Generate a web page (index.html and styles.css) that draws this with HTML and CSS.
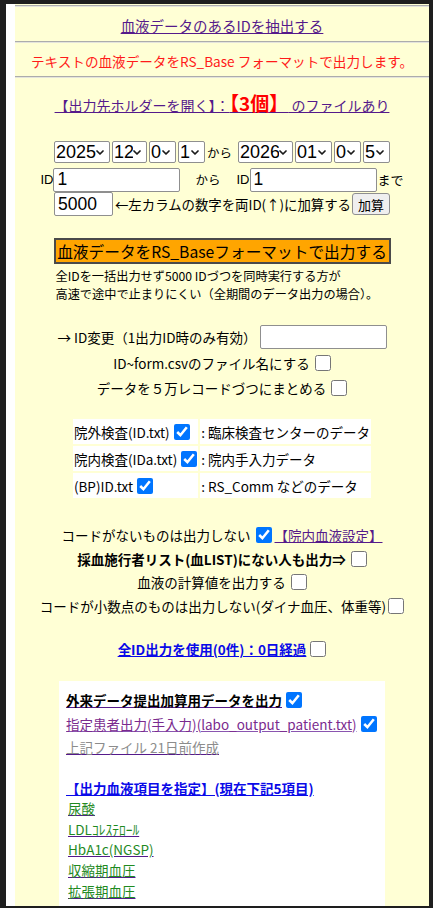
FILE: index.html
```html
<!DOCTYPE html>
<html lang="ja">
<head>
<meta charset="utf-8">
<title>RS_Base 出力</title>
<link rel="stylesheet" href="styles.css">
</head>
<body>
<div class="frame">
  <div class="panel">
    <hr class="rule">
    <div class="head"><a class="lk-v" href="#">血液データのあるIDを抽出する</a></div>
    <hr class="rule">
    <div class="notice">テキストの血液データをRS_Base フォーマットで出力します。</div>
    <hr class="rule">
    <div class="folder"><a class="lk-v" href="#">【出力先ホルダーを開く】：<span class="count">【3個】</span> のファイルあり</a></div>

    <form class="form">
      <div class="row date-row">
        <span class="selw w-y"><select class="sel"><option>2025</option></select><svg class="chev" viewBox="0 0 8 5"><path d="M1 1l3 3 3-3"/></svg></span>
        <span class="selw w-m"><select class="sel"><option>12</option></select><svg class="chev" viewBox="0 0 8 5"><path d="M1 1l3 3 3-3"/></svg></span>
        <span class="selw w-d"><select class="sel"><option>0</option></select><svg class="chev" viewBox="0 0 8 5"><path d="M1 1l3 3 3-3"/></svg></span>
        <span class="selw w-d"><select class="sel"><option>1</option></select><svg class="chev" viewBox="0 0 8 5"><path d="M1 1l3 3 3-3"/></svg></span>
        <span class="kara">から</span>
        <span class="selw w-y2"><select class="sel"><option>2026</option></select><svg class="chev" viewBox="0 0 8 5"><path d="M1 1l3 3 3-3"/></svg></span>
        <span class="selw w-m2"><select class="sel"><option>01</option></select><svg class="chev" viewBox="0 0 8 5"><path d="M1 1l3 3 3-3"/></svg></span>
        <span class="selw w-d"><select class="sel"><option>0</option></select><svg class="chev" viewBox="0 0 8 5"><path d="M1 1l3 3 3-3"/></svg></span>
        <span class="selw w-d"><select class="sel"><option>5</option></select><svg class="chev" viewBox="0 0 8 5"><path d="M1 1l3 3 3-3"/></svg></span>
      </div>
      <div class="row id-row">
        <span class="lbl">ID</span><input class="txt w-id" type="text" value="1">
        <span class="kara2">から</span>
        <span class="lbl">ID</span><input class="txt w-id" type="text" value="1">
        <span class="made">まで</span>
      </div>
      <div class="row calc-row">
        <input class="txt w-add" type="text" value="5000">
        <span class="calc-txt">←左カラムの数字を両ID(↑)に加算する</span>
        <button class="btn-add" type="button">加算</button>
      </div>

      <button class="go" type="button">血液データをRS_Baseフォーマットで出力する</button>
      <div class="note">全IDを一括出力せず5000 IDづつを同時実行する方が<br>高速で途中で止まりにくい（全期間のデータ出力の場合）。</div>

      <div class="opts">
        <div class="opt opt-tall">
          <span>→ ID変更（1出力ID時のみ有効）</span>
          <input class="txt w-chg" type="text">
        </div>
        <div class="opt opt-25">
          <span>ID~form.csvのファイル名にする</span>
          <input class="cb" type="checkbox">
        </div>
        <div class="opt opt-25">
          <span>データを５万レコードづつにまとめる</span>
          <input class="cb" type="checkbox">
        </div>
      </div>

      <table class="src">
        <tr>
          <td>院外検査(ID.txt) <input class="cb cb-in" type="checkbox" checked></td>
          <td>: 臨床検査センターのデータ</td>
        </tr>
        <tr>
          <td>院内検査(IDa.txt) <input class="cb cb-in" type="checkbox" checked></td>
          <td>: 院内手入力データ</td>
        </tr>
        <tr>
          <td>(BP)ID.txt <input class="cb cb-in" type="checkbox" checked></td>
          <td>: RS_Comm などのデータ</td>
        </tr>
      </table>

      <div class="flags">
        <div class="opt opt-f">
          <span>コードがないものは出力しない</span>
          <input class="cb" type="checkbox" checked>
          <a class="lk-v inhouse" href="#">【院内血液設定】</a>
        </div>
        <div class="opt opt-f">
          <b>採血施行者リスト(血LIST)にない人も出力⇒</b>
          <input class="cb" type="checkbox">
        </div>
        <div class="opt opt-f">
          <span>血液の計算値を出力する</span>
          <input class="cb" type="checkbox">
        </div>
        <div class="opt opt-f tight">
          <span>コードが小数点のものは出力しない(ダイナ血圧、体重等)</span>
          <input class="cb" type="checkbox">
        </div>
        <div class="opt opt-f all-id">
          <a class="lk-b" href="#"><b>全ID出力を使用(0件)：0日経過</b></a>
          <input class="cb" type="checkbox">
        </div>
      </div>

      <div class="outbox">
        <div class="ob-row ob-1">
          <a class="lk-v" href="#"><b class="blk">外来データ提出加算用データを出力</b></a>
          <input class="cb" type="checkbox" checked>
        </div>
        <div class="ob-row ob-2">
          <a class="lk-p" href="#">指定患者出力(手入力)(labo_output_patient.txt)</a>
          <input class="cb" type="checkbox" checked>
        </div>
        <div class="ob-row ob-3">
          <a class="lk-v" href="#"><span class="gray">上記ファイル 21日前作成</span></a>
        </div>
        <div class="ob-blank"></div>
        <div class="ob-row ob-3">
          <a class="lk-b" href="#"><b>【出力血液項目を指定】(現在下記5項目)</b></a>
        </div>
        <ul class="items">
          <li><a class="lk-v" href="#"><span class="green">尿酸</span></a></li>
          <li><a class="lk-v" href="#"><span class="green">LDLｺﾚｽﾃﾛｰﾙ</span></a></li>
          <li><a class="lk-v" href="#"><span class="green">HbA1c(NGSP)</span></a></li>
          <li><a class="lk-v" href="#"><span class="green">収縮期血圧</span></a></li>
          <li><a class="lk-v" href="#"><span class="green">拡張期血圧</span></a></li>
        </ul>
      </div>
    </form>
  </div>
</div>
</body>
</html>
```

FILE: styles.css
```css
* { box-sizing: border-box; }

html, body {
  margin: 0;
}

body {
  background: #1e1e1e;
  width: 433px;
  height: 908px;
  overflow: hidden;
  padding: 4px 0 0 6px;
  font-family: "Noto Sans CJK JP", "Noto Sans", sans-serif;
  font-size: 13.5px;
  color: #000;
}

.frame {
  width: 423px;
  height: 902px;
  background: #ffffff;
  padding-left: 9px;
  overflow: hidden;
}

.panel {
  background: #ffffd5;
  height: 100%;
  padding-top: 1px;
  text-align: center;
}

.rule {
  margin: 0;
  height: 0;
  border: 0;
  border-top: 1px solid #acacac;
  border-bottom: 1px solid #e4e4dc;
}

a { text-decoration: underline; }
.lk-v { color: #551a8b; }
.lk-p { color: #7a2a8e; text-decoration-color: #8a55b0; }
.lk-b { color: #0a0ae8; }

.head {
  padding: 9px 0 5px;
  line-height: 20px;
  font-size: 14.5px;
}

.notice {
  padding: 8px 0 5px;
  line-height: 20px;
  font-size: 13.6px;
  color: #ff1a1a;
}

.folder {
  margin-top: 12px;
  line-height: 26px;
  font-size: 14px;
}

.count {
  color: #ff0000;
  font-weight: bold;
  font-size: 19px;
}

/* form rows */
.form {
  margin: 0;
  font-family: "Liberation Sans", "Noto Sans CJK JP", sans-serif;
  font-size: 13px;
}

.row {
  display: flex;
  justify-content: center;
  align-items: center;
}

.date-row {
  margin-top: 22px;
  height: 24px;
  gap: 2px;
}

.selw {
  display: inline-flex;
  align-items: center;
  height: 22px;
  padding-right: 5px;
  background: #fff;
  border: 1px solid #8f8f8f;
  border-radius: 2px;
}

.sel {
  appearance: none;
  -webkit-appearance: none;
  flex: 1;
  min-width: 0;
  height: 20px;
  margin: 0;
  padding: 0 0 0 1px;
  font-family: "Liberation Sans", sans-serif;
  font-size: 18px;
  line-height: 20px;
  color: #000;
  background: transparent;
  border: 0;
  outline: none;
}

.chev {
  flex: none;
  width: 8px;
  height: 5px;
  fill: none;
  stroke: #1a1a1a;
  stroke-width: 1.7;
  stroke-linecap: round;
  stroke-linejoin: round;
}

.w-y { width: 56px; }
.w-m { width: 35px; }
.w-d { width: 27px; }
.w-y2 { width: 55px; }
.w-m2 { width: 37px; }

.kara {
  font-family: "Noto Sans CJK JP", sans-serif;
  font-size: 12.5px;
  margin-right: 4px;
}

.id-row {
  margin-top: 3px;
  height: 25px;
}

.lbl {
  font-size: 13px;
}

.kara2 {
  font-family: "Noto Sans CJK JP", sans-serif;
  font-size: 12.5px;
  margin: 0 16px 0 15px;
}

.made {
  font-family: "Noto Sans CJK JP", sans-serif;
  font-size: 13px;
  margin-left: 1px;
}

.txt {
  height: 24px;
  margin: 0;
  padding: 1px 3px;
  font-family: "Liberation Sans", sans-serif;
  font-size: 17.5px;
  color: #000;
  background: #fff;
  border: 1px solid #8f8f8f;
  border-radius: 2px;
}

.w-id { width: 127px; }
.w-add { width: 59px; }
.w-chg { width: 127px; }

.calc-row {
  height: 24px;
}

.calc-txt {
  margin: 0 1px 0 2px;
  font-family: "Noto Sans CJK JP", sans-serif;
  font-size: 13.4px;
}

.btn-add {
  width: 38px;
  height: 22px;
  padding: 0;
  margin: 0;
  font-family: "Noto Sans CJK JP", sans-serif;
  font-size: 13px;
  color: #000;
  background: #efefef;
  border: 1px solid #8f8f8f;
  border-radius: 3px;
}

.go {
  display: block;
  margin: 22px auto 0;
  width: 337px;
  height: 26px;
  padding: 0;
  font-family: "Noto Sans CJK JP", sans-serif;
  font-size: 15.7px;
  color: #000;
  background: #ffa500;
  border: 2px solid #4a4a4a;
  border-radius: 0;
}

.note {
  width: 337px;
  margin: 4px auto 0;
  padding-left: 2px;
  text-align: left;
  font-family: "Noto Sans CJK JP", sans-serif;
  font-size: 12.2px;
  line-height: 17.5px;
}

/* options */
.opts {
  margin-top: 21px;
  font-family: "Noto Sans CJK JP", sans-serif;
  font-size: 13.5px;
}

.opt {
  display: flex;
  justify-content: center;
  align-items: center;
  gap: 5px;
}

.opt-tall { height: 26px; gap: 3px; }
.opt-25 { height: 25px; }

.cb {
  width: 16px;
  height: 16px;
  margin: 0;
  flex: none;
}

/* table */
.src {
  margin: 17px auto 0;
  border-spacing: 2px;
  font-family: "Noto Sans CJK JP", sans-serif;
  font-size: 13.5px;
  text-align: left;
}

.src td {
  height: 25px;
  padding: 0 1px;
  background: #ffffff;
  vertical-align: middle;
  white-space: nowrap;
}

.cb-in {
  vertical-align: -2px;
  margin-left: 1px;
}

/* flags */
.flags {
  margin-top: 23.5px;
  font-family: "Noto Sans CJK JP", sans-serif;
  font-size: 13.5px;
}

.opt-f { height: 23.5px; }
.opt-f .inhouse { margin-left: -2px; }
.tight { gap: 2px; }
.all-id { margin-top: 19.75px; gap: 4px; }

/* output box */
.outbox {
  width: 326px;
  margin: 20.25px auto 0;
  padding: 7px 0 12px 7px;
  background: #ffffff;
  text-align: left;
  font-family: "Noto Sans CJK JP", sans-serif;
  font-size: 13.5px;
}

.ob-row {
  display: flex;
  align-items: center;
  gap: 4px;
}

.ob-1 { height: 23px; }
.ob-2 { height: 25px; }
.ob-3 { height: 21px; }
.ob-blank { height: 20px; }

.blk { color: #000; }
.gray { color: #8c8c8c; }
.green { color: #1f8a1f; }

.items {
  list-style: none;
  margin: 0;
  padding: 0 0 0 2px;
}

.items li {
  line-height: 20.7px;
}
```
